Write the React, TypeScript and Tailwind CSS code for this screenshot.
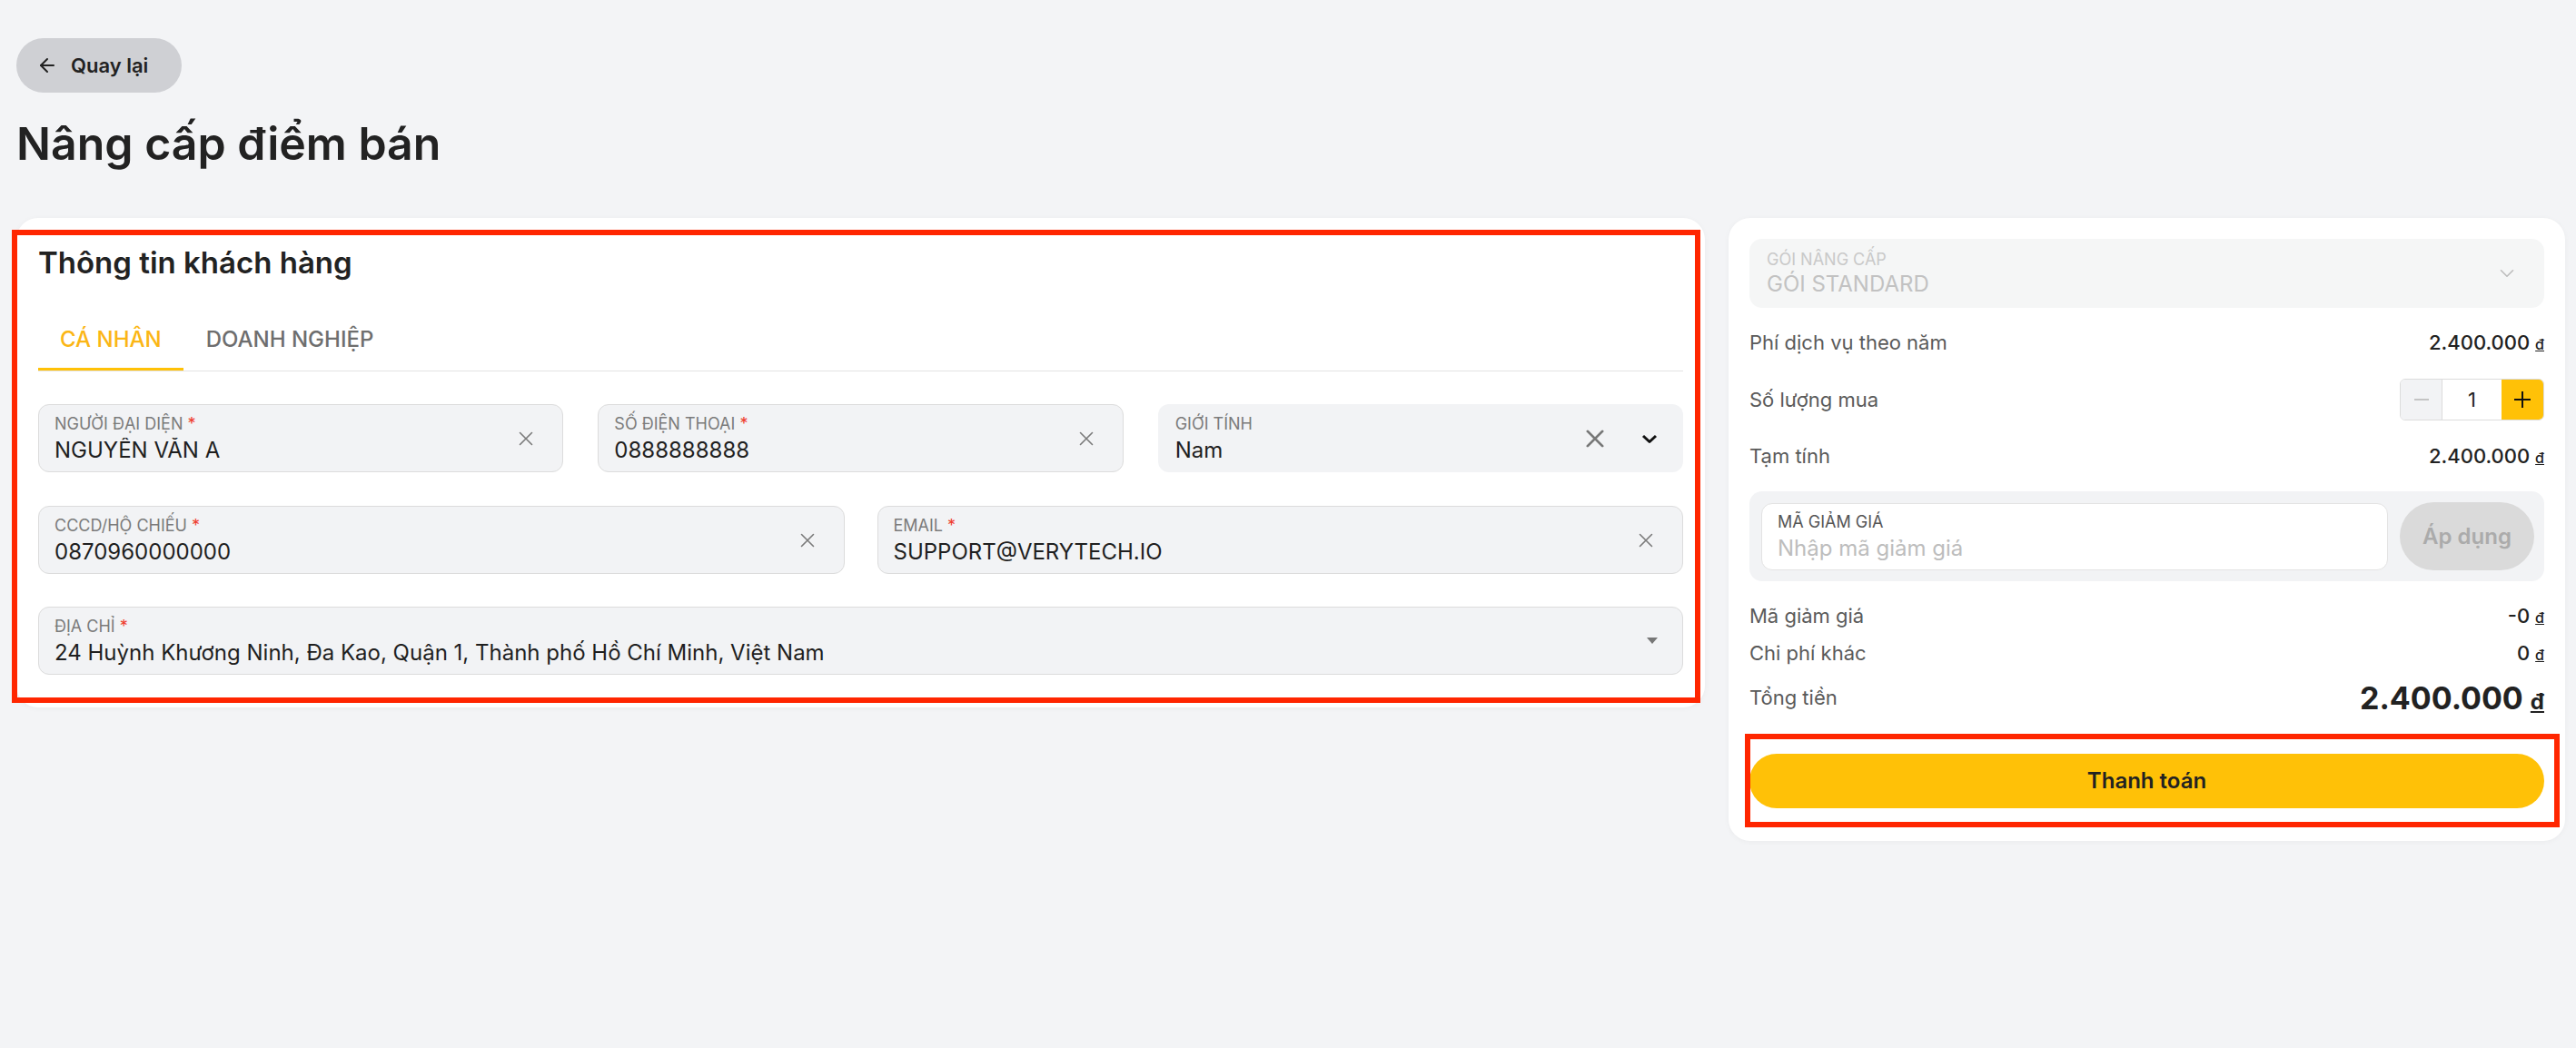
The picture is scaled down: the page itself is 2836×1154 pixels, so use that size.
import React, { useState } from "react";
import { ArrowLeft, ChevronDown } from "lucide-react";

const font = { fontFamily: "Inter, 'Noto Sans', sans-serif" };

// thin clear icon used inside the text fields
const ClearIcon = ({ size = 16, stroke = 1.6, color = "#7a7a7a" }) => (
  <svg width={size} height={size} viewBox="0 0 16 16" fill="none">
    <path d="M1.5 1.5L14.5 14.5M14.5 1.5L1.5 14.5" stroke={color} strokeWidth={stroke} strokeLinecap="round" />
  </svg>
);

const Label = ({ text, required }: { text: string; required?: boolean }) => (
  <div className="h-[22px] text-[18px] leading-[22px] text-[#7b7b7b] uppercase">
    {text}
    {required && <span className="text-[#ef3b2d]"> *</span>}
  </div>
);

interface FieldProps {
  label: string;
  value: string;
  required?: boolean;
}

const TextField: React.FC<FieldProps> = ({ label, value, required }) => {
  const [val, setVal] = useState(value);
  return (
    <div className="flex items-center rounded-[12px] border border-[#dcdcdc] bg-[#f2f3f5] pl-[17px] pr-[32px]">
      <div className="flex-1 pt-[10px] pb-[9px]">
        <Label text={label} required={required} />
        <input
          value={val}
          onChange={(e) => setVal(e.target.value)}
          className="mt-[4px] block h-[28px] w-full bg-transparent text-[24px] leading-[28px] text-[#1f1f1f] outline-none"
        />
      </div>
      <button onClick={() => setVal("")} className="shrink-0">
        <ClearIcon />
      </button>
    </div>
  );
};

const Row = ({ label, children, h = "h-[30px]" }: { label: string; children: React.ReactNode; h?: string }) => (
  <div className={`flex items-center justify-between ${h}`}>
    <span className="text-[22px] text-[#5a5a5a]">{label}</span>
    {children}
  </div>
);

const Money = ({ amount }: { amount: string }) => (
  <span className="text-[22px] font-medium text-[#222]">
    {amount} <span className="text-[16px] underline">đ</span>
  </span>
);

export default function App() {
  const [tab, setTab] = useState<"personal" | "business">("personal");
  const [qty, setQty] = useState(1);

  return (
    <div style={font} className="min-h-screen bg-[#f3f4f6] pl-[18px] pr-[12px] pt-[42px] pb-10 text-[#222]">
      <button className="flex h-[60px] w-[182px] items-center gap-[14px] rounded-full bg-[#cfd0d4] pl-[22px] text-[22px] font-semibold text-[#222]">
        <ArrowLeft size={24} strokeWidth={2} />
        Quay lại
      </button>

      <h1 className="mt-[26px] text-[50px] font-semibold leading-[60px] text-[#222]">Nâng cấp điểm bán</h1>

      <div className="mt-[52px] flex items-start gap-[26px]">
        {/* customer info */}
        <div className="relative flex-1 rounded-[24px] bg-white px-[24px] pt-[29px] pb-[36px] shadow-[0_1px_6px_rgba(0,0,0,0.04)]">
          <h2 className="text-[33px] font-semibold leading-[40px] text-[#222]">Thông tin khách hàng</h2>

          <div className="mt-[32px] flex border-b border-[#e3e3e3]">
            <button
              onClick={() => setTab("personal")}
              className={`border-b-[3px] px-[24px] pt-[18px] pb-[16px] text-[24px] font-medium leading-[30px] ${
                tab === "personal" ? "border-[#ffc107] text-[#fbb615]" : "border-transparent text-[#6e6e6e]"
              }`}
            >
              CÁ NHÂN
            </button>
            <button
              onClick={() => setTab("business")}
              className={`border-b-[3px] px-[25px] pt-[18px] pb-[16px] text-[24px] font-medium leading-[30px] ${
                tab === "business" ? "border-[#ffc107] text-[#fbb615]" : "border-transparent text-[#6e6e6e]"
              }`}
            >
              DOANH NGHIỆP
            </button>
          </div>

          <div className="mt-[36px] grid grid-cols-3 gap-x-[38px]">
            <TextField label="Người đại diện" value="NGUYỄN VĂN A" required />
            <TextField label="Số điện thoại" value="0888888888" required />
            <div className="flex items-center rounded-[12px] border border-transparent bg-[#f2f3f5] pl-[18px] pr-[27px]">
              <div className="flex-1 pt-[10px] pb-[9px]">
                <Label text="Giới tính" />
                <div className="mt-[4px] h-[28px] text-[24px] leading-[28px] text-[#1f1f1f]">Nam</div>
              </div>
              <ClearIcon size={20} stroke={2.2} color="#777" />
              <svg className="ml-[41px]" width="18" height="12" viewBox="0 0 18 12" fill="none">
                <path d="M2 3L9 9.5L16 3" stroke="#111" strokeWidth="3" strokeLinejoin="round" />
              </svg>
            </div>
          </div>

          <div className="mt-[37px] grid grid-cols-2 gap-x-[36px]">
            <TextField label="CCCD/Hộ chiếu" value="0870960000000" required />
            <TextField label="Email" value="SUPPORT@VERYTECH.IO" required />
          </div>

          <div className="mt-[36px] flex items-center rounded-[12px] border border-[#dcdcdc] bg-[#f2f3f5] pl-[17px] pr-[27px]">
            <div className="flex-1 pt-[10px] pb-[9px]">
              <Label text="Địa chỉ" required />
              <div className="mt-[4px] h-[28px] text-[24px] leading-[28px] text-[#1f1f1f]">
                24 Huỳnh Khương Ninh, Đa Kao, Quận 1, Thành phố Hồ Chí Minh, Việt Nam
              </div>
            </div>
            <svg width="12" height="8" viewBox="0 0 12 8">
              <path d="M0 0H12L6 7Z" fill="#777" />
            </svg>
          </div>

          <div className="pointer-events-none absolute top-[13px] right-[5px] bottom-[5px] left-[-5px] border-[6px] border-[#ff2600]" />
        </div>

        {/* order summary */}
        <div className="relative flex w-[921px] flex-col rounded-[24px] bg-white px-[23px] pt-[23px] pb-[36px] shadow-[0_1px_6px_rgba(0,0,0,0.04)]">
          <div className="flex h-[76px] items-center rounded-[14px] bg-[#f5f6f6] pl-[19px] pr-[28px]">
            <div className="flex-1">
              <div className="text-[18px] leading-[22px] text-[#c9c9c9]">GÓI NÂNG CẤP</div>
              <div className="mt-[2px] text-[24px] leading-[28px] text-[#c2c2c2]">GÓI STANDARD</div>
            </div>
            <ChevronDown size={26} strokeWidth={1.5} color="#bdbdbd" />
          </div>

          <div className="mt-[23px]">
            <Row label="Phí dịch vụ theo năm">
              <Money amount="2.400.000" />
            </Row>
          </div>

          <div className="mt-[25px]">
            <Row label="Số lượng mua" h="h-[46px]">
              <div className="flex h-[46px] overflow-hidden rounded-[6px] border border-[#dcdcdc]">
                <button
                  onClick={() => setQty(Math.max(1, qty - 1))}
                  className="flex w-[46px] items-center justify-center border-r border-[#dcdcdc] bg-[#f2f3f5]"
                >
                  <span className="block h-[2px] w-[16px] bg-[#c4c4c4]" />
                </button>
                <div className="flex w-[65px] items-center justify-center bg-white text-[22px] text-[#222]">{qty}</div>
                <button onClick={() => setQty(qty + 1)} className="flex w-[46px] items-center justify-center bg-[#ffc107]">
                  <svg width="20" height="20" viewBox="0 0 20 20">
                    <path d="M10 1V19M1 10H19" stroke="#111" strokeWidth="2" />
                  </svg>
                </button>
              </div>
            </Row>
          </div>

          <div className="mt-[24px]">
            <Row label="Tạm tính">
              <Money amount="2.400.000" />
            </Row>
          </div>

          <div className="mt-[24px] flex h-[99px] items-center gap-[13px] rounded-[14px] bg-[#f2f3f5] pl-[13px] pr-[11px]">
            <div className="h-[74px] flex-1 rounded-[12px] border border-[#e3e3e3] bg-white pl-[17px] pt-[9px]">
              <div className="text-[18px] leading-[22px] text-[#555]">MÃ GIẢM GIÁ</div>
              <input
                placeholder="Nhập mã giảm giá"
                className="mt-[4px] block h-[28px] w-full bg-transparent text-[24px] leading-[28px] text-[#222] outline-none placeholder:text-[#bdbdbd]"
              />
            </div>
            <button className="h-[75px] w-[148px] rounded-full bg-[#dadada] text-[24px] font-semibold text-[#ababab]">
              Áp dụng
            </button>
          </div>

          <div className="mt-[23px]">
            <Row label="Mã giảm giá">
              <Money amount="-0" />
            </Row>
          </div>
          <div className="mt-[11px]">
            <Row label="Chi phí khác">
              <Money amount="0" />
            </Row>
          </div>
          <div className="mt-[12px]">
            <Row label="Tổng tiền" h="h-[44px]">
              <span className="text-[34px] font-bold text-[#222]">
                2.400.000 <span className="text-[24px] underline">đ</span>
              </span>
            </Row>
          </div>

          <button className="mt-[40px] h-[60px] w-full rounded-full bg-[#ffc107] text-[24px] font-semibold text-[#222]">
            Thanh toán
          </button>

          <div className="pointer-events-none absolute top-[568px] right-[6px] bottom-[15px] left-[18px] border-[6px] border-[#ff2600]" />
        </div>
      </div>
    </div>
  );
}
